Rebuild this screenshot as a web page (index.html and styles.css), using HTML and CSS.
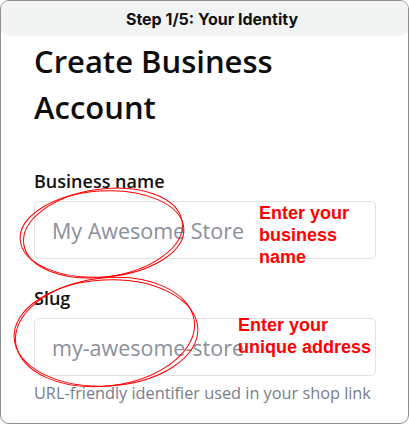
FILE: index.html
```html
<!DOCTYPE html>
<html>
<head>
<meta charset="utf-8">
<link rel="stylesheet" href="styles.css">
</head>
<body>
<div class="frame">
  <div class="header">Step 1/5: Your Identity</div>
  <div class="content">
    <h1 class="title">Create Business Account</h1>
    <div class="field field-first">
      <label class="label">Business name</label>
      <div class="input"><span class="placeholder">My Awesome Store</span></div>
    </div>
    <div class="field">
      <label class="label">Slug</label>
      <div class="input"><span class="placeholder">my-awesome-store</span></div>
      <div class="help">URL-friendly identifier used in your shop link</div>
    </div>
  </div>
  <div class="note note-1">Enter your<br>business<br>name</div>
  <div class="note note-2">Enter your<br>unique address</div>
  <svg class="marks" width="409" height="424" viewBox="0 0 409 424">
    <g fill="none" stroke="#ff0000" stroke-width="1">
      <ellipse cx="102" cy="234" rx="82" ry="43" transform="rotate(-4 102 234)"/>
      <ellipse cx="103" cy="233" rx="80" ry="44" transform="rotate(-8 103 233)"/>
      <ellipse cx="106" cy="333" rx="92" ry="53" transform="rotate(-3 106 333)"/>
      <ellipse cx="105" cy="332" rx="90" ry="54" transform="rotate(-7 105 332)"/>
    </g>
  </svg>
</div>
</body>
</html>
```

FILE: styles.css
```css
html, body {
  margin: 0;
  padding: 0;
  background: #ffffff;
}
.frame {
  position: relative;
  box-sizing: border-box;
  width: 409px;
  height: 424px;
  border: 1.5px solid #8e8e8e;
  border-radius: 9px;
  overflow: hidden;
  background: #ffffff;
}
.header {
  box-sizing: border-box;
  height: 36px;
  margin: -1px -1px 0 -1px;
  padding-left: 15px;
  padding-top: 1px;
  background: #f2f3f3;
  border-radius: 9px;
  font-family: Inter, "Liberation Sans", sans-serif;
  font-weight: 700;
  font-size: 16px;
  color: #111111;
  display: flex;
  align-items: center;
  justify-content: center;
}
.content {
  padding: 0 32px 0 33px;
  font-family: "Open Sans", "Noto Sans", sans-serif;
}
.title {
  margin: 2px 0 0 0;
  font-size: 31px;
  line-height: 46px;
  font-weight: 600;
  color: #0d0d0d;
}
.field {
  display: flex;
  flex-direction: column;
  margin-bottom: 27px;
}
.field-first { margin-top: 39px; }
.label {
  font-size: 18px;
  font-weight: 600;
  color: #111111;
  line-height: 24px;
  margin-bottom: 8px;
}
.input {
  box-sizing: border-box;
  height: 58px;
  border: 1.5px solid #e2e2e2;
  border-radius: 5px;
  display: flex;
  align-items: center;
  padding-left: 17px;
}
.placeholder {
  font-size: 21.5px;
  color: #8a9099;
}
.help {
  margin-top: 6px;
  font-size: 16.3px;
  color: #767d8b;
  white-space: nowrap;
}
.note {
  position: absolute;
  font-family: "Liberation Sans", Arial, sans-serif;
  font-weight: 700;
  font-size: 18px;
  line-height: 22px;
  color: #ff0000;
}
.note-1 { left: 258px; top: 201px; }
.note-2 { left: 237px; top: 313px; }
.marks {
  position: absolute;
  left: -1.5px;
  top: -1.5px;
  pointer-events: none;
}
```
